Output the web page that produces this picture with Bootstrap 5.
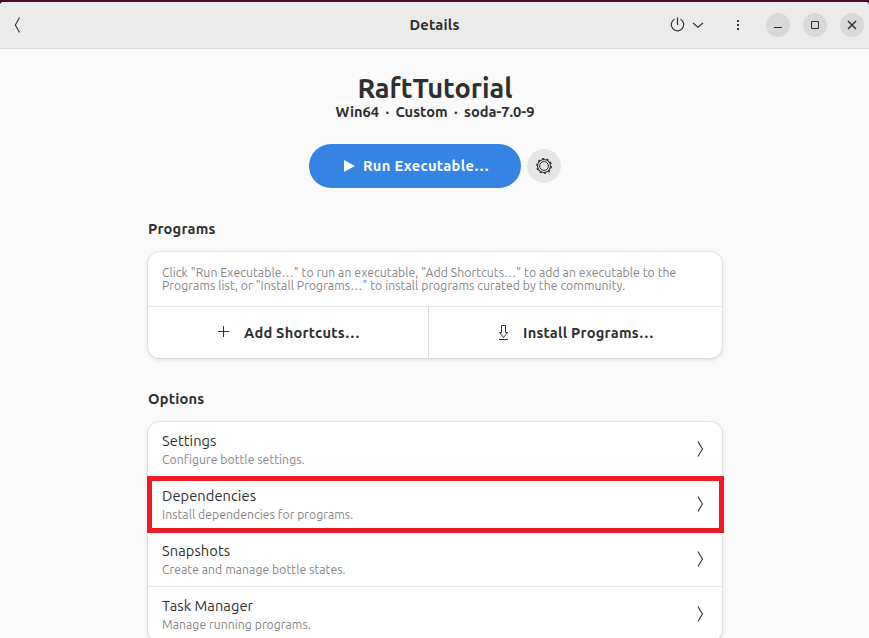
<!DOCTYPE html>
<html lang="en">
<head>
<meta charset="utf-8">
<meta name="viewport" content="width=device-width, initial-scale=1">
<title>Details</title>
<link rel="stylesheet" href="https://cdn.jsdelivr.net/npm/bootstrap@5.3.0/dist/css/bootstrap.min.css">
<style>
  body { font-family: Ubuntu, "Noto Sans", sans-serif; font-size: 14.67px; line-height: 20px; color: #2f2f2f; background: #4a0d2d; height: 638px; overflow: hidden; white-space: nowrap; }
  svg { display: block; fill: none; stroke: #323232; flex: none; }
  .window { margin-top: 2px; height: 636px; background: #fafafa; border-radius: 4px 4px 0 0; overflow: hidden; }
  .titlebar { height: 47px; background: #ebebeb; border-bottom: 1px solid #d9d9d9; padding: 0 5px 0 10px; display: grid; grid-template-columns: 1fr auto 1fr; align-items: center; }
  .win-title { letter-spacing: .22px; margin-right: 5px; }
  .win-btn { width: 24px; height: 24px; background: #d9d9d9; }
  .content { width: 574px; margin-left: 148px; }
  .bottle-name { font-size: 27.2px; line-height: 32px; margin-top: 23px; }
  .bottle-info { font-size: 14.67px; line-height: 16px; word-spacing: -.3px; }
  .run-row { gap: 6px; margin-top: 24px; }
  .run-btn { width: 212px; height: 44px; background: #3584e4; color: #fff; padding: 0 0 0 34px; font-size: 14.67px; letter-spacing: .32px; }
  .run-btn:hover { background: #3584e4; color: #fff; }
  .run-btn span { margin-left: 8px; padding-bottom: 1px; }
  .gear-btn { width: 34px; height: 34px; background: #e6e6e6; }
  .group-title { font-size: 14.67px; line-height: 20px; letter-spacing: .2px; margin-top: 31px; }
  .panel { margin-top: 13px; border-radius: 12px; box-shadow: 0 0 0 1px rgba(0,0,0,.04), 0 1px 3px 1px rgba(0,0,0,.08), 0 2px 6px 2px rgba(0,0,0,.03); }
  .hint { height: 55px; padding: 14px 14px 0; font-size: 12.2px; letter-spacing: .08px; line-height: 13px; color: #868686; border-bottom: 1px solid #e6e6e6; }
  .half { height: 51px; letter-spacing: .22px; }
  .half-left { width: 281px; border-right: 1px solid #dcdcdc; padding-left: 69px; }
  .half-right { padding-left: 67px; }
  .option { height: 55px; padding: 0 14px; border-bottom: 1px solid #e6e6e6; letter-spacing: .06px; }
  .option:last-child { border-bottom: 0; }
  .option-text { padding-top: 1px; }
  .option-sub { font-size: 12.2px; line-height: 18px; color: #868686; }
  .highlight { left: -1px; top: 54px; width: 577px; height: 57px; border: 5px solid #ed1c24; }
</style>
</head>
<body>
<div class="window">
  <header class="titlebar">
    <svg width="14" height="18" viewBox="0 0 14 18" stroke-width="1.1"><path d="M9.500 1.500Q8 4.500 5.300 9Q8 13.500 9.500 16.500"/></svg>
    <span class="win-title fw-bold">Details</span>
    <div class="d-flex align-items-center justify-content-end">
      <svg width="16" height="16" viewBox="0 0 16 16" stroke-width="1.2"><path d="M5.500 2.200A6.200 6.200 0 1 0 11.500 2.200M8.500 .5V8"/></svg>
      <svg style="margin-left:7px" width="12" height="8" viewBox="0 0 12 8" stroke-width="1.2"><path d="M1 2L6 6.200L11 2"/></svg>
      <svg width="4" height="12" viewBox="0 0 4 12" style="margin:0 26px 0 32px"><path fill="#323232" stroke="none" d="M1 1h2v2H1zM1 5h2v2H1zM1 9h2v2H1z"/></svg>
      <div class="d-flex" style="gap:13px">
        <span class="win-btn rounded-circle"><svg width="24" height="24"><path d="M8 14.500h8"/></svg></span>
        <span class="win-btn rounded-circle"><svg width="24" height="24"><path d="M8.500 8.500h7v7h-7z"/></svg></span>
        <span class="win-btn rounded-circle"><svg width="24" height="24" stroke-width="1.5"><path d="M8 8l8 8M16 8l-8 8"/></svg></span>
      </div>
    </div>
  </header>

  <main class="content">
    <h1 class="bottle-name fw-bold text-center mb-0">RaftTutorial</h1>
    <div class="bottle-info fw-bold text-center">Win64 &nbsp;·&nbsp; Custom &nbsp;·&nbsp; soda-7.0-9</div>

    <div class="run-row d-flex align-items-center justify-content-center">
      <button class="run-btn btn rounded-pill border-0 fw-bold d-flex align-items-center">
        <svg width="12" height="12" viewBox="0 0 12 12"><path fill="#fff" stroke="none" d="M1 0L12 6L1 12z"/></svg>
        <span>Run Executable…</span>
      </button>
      <span class="gear-btn rounded-circle d-flex align-items-center justify-content-center">
        <svg width="18" height="18" viewBox="-9 -9 18 18"><circle r="6.500" stroke-width="1.1"/><circle r="4.400" stroke-width="1"/><circle r="7.300" stroke-width="1.300" stroke-dasharray="2.300 2.287"/></svg>
      </span>
    </div>

    <h2 class="group-title fw-bold mb-0">Programs</h2>
    <section class="panel bg-white">
      <div class="hint">Click "Run Executable…" to run an executable, "Add Shortcuts…" to add an executable to the<br>Programs list, or "Install Programs…" to install programs curated by the community.</div>
      <div class="d-flex fw-bold">
        <div class="half half-left d-flex align-items-center">
          <svg width="13" height="13"><path d="M6.500 1v11M1 6.500h11" transform="translate(0 -1)"/></svg>
          <span style="margin-left:14px">Add Shortcuts…</span>
        </div>
        <div class="half half-right d-flex align-items-center">
          <svg width="14" height="18" viewBox="0 0 14 18"><path d="M5.500 1.500h4v7h2L7.500 13.500L3.500 8.500h2zM3 15.500h9"/></svg>
          <span style="margin-left:13px">Install Programs…</span>
        </div>
      </div>
    </section>

    <h2 class="group-title fw-bold mb-0">Options</h2>
    <section class="panel bg-white position-relative">
      <div class="option d-flex align-items-center justify-content-between">
        <div class="option-text"><div>Settings</div><div class="option-sub">Configure bottle settings.</div></div>
        <svg width="16" height="18" viewBox="0 0 16 18" stroke-width="1.100"><path d="M6 1.500Q7.500 4.500 10.500 9Q7.500 13.500 6 16.500"/></svg>
      </div>
      <div class="option d-flex align-items-center justify-content-between">
        <div class="option-text"><div>Dependencies</div><div class="option-sub">Install dependencies for programs.</div></div>
        <svg width="16" height="18" viewBox="0 0 16 18" stroke-width="1.100"><path d="M6 1.500Q7.500 4.500 10.500 9Q7.500 13.500 6 16.500"/></svg>
      </div>
      <div class="option d-flex align-items-center justify-content-between">
        <div class="option-text"><div>Snapshots</div><div class="option-sub">Create and manage bottle states.</div></div>
        <svg width="16" height="18" viewBox="0 0 16 18" stroke-width="1.100"><path d="M6 1.500Q7.500 4.500 10.500 9Q7.500 13.500 6 16.500"/></svg>
      </div>
      <div class="option d-flex align-items-center justify-content-between">
        <div class="option-text"><div>Task Manager</div><div class="option-sub">Manage running programs.</div></div>
        <svg width="16" height="18" viewBox="0 0 16 18" stroke-width="1.100"><path d="M6 1.500Q7.500 4.500 10.500 9Q7.500 13.500 6 16.500"/></svg>
      </div>
      <div class="highlight position-absolute"></div>
    </section>
  </main>
</div>
<script src="https://cdn.jsdelivr.net/npm/bootstrap@5.3.0/dist/js/bootstrap.bundle.min.js"></script>
</body>
</html>
